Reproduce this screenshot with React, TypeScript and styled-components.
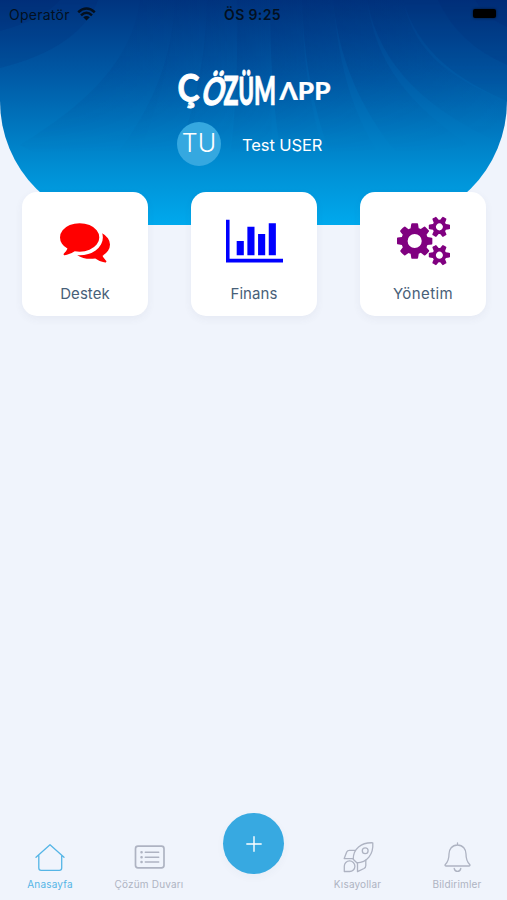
import React from "react";
import styled, { createGlobalStyle } from "styled-components";

const GlobalStyle = createGlobalStyle`
  * { box-sizing: border-box; }
  body { margin: 0; background: #f0f4fc; font-family: Inter, "Open Sans", sans-serif; }
`;

const Screen = styled.div`
  width: 507px;
  height: 900px;
  display: flex;
  flex-direction: column;
  background: #f0f4fc;
  overflow: hidden;
`;

const Header = styled.header`
  position: relative;
  height: 225px;
  flex: none;
  border-radius: 0 0 124px 124px;
  overflow: hidden;
  background: linear-gradient(180deg, #00347f 0%, #004591 15%, #0059a5 33%, #0071ba 52%, #0090d5 76%, #00a9ed 100%);
`;

const Rays = styled.svg`
  position: absolute;
  inset: 0;
`;

const HeaderContent = styled.div`
  position: relative;
  display: flex;
  flex-direction: column;
`;

const StatusBar = styled.div`
  height: 28px;
  padding: 0 11px 0 9px;
  display: grid;
  grid-template-columns: 1fr auto 1fr;
  align-items: center;
  color: #03101f;
  font-size: 14px;
`;

const Carrier = styled.div`
  display: flex;
  align-items: center;
  gap: 7px;
  letter-spacing: 0.25px;
`;

const Clock = styled.div`
  font-weight: 600;
  letter-spacing: 0.35px;
`;

const Battery = styled.div`
  justify-self: end;
  width: 23px;
  height: 9px;
  margin-top: -1px;
  border-radius: 2px;
  background: #000;
  box-shadow: 0 0 3px rgba(0, 0, 0, 0.6);
`;

const Logo = styled.svg`
  margin: 37px 0 0 172px;
  display: block;
`;

const UserRow = styled.div`
  display: flex;
  align-items: center;
  gap: 21px;
  margin: 10px 0 0 177px;
`;

const Avatar = styled.div`
  width: 44px;
  height: 44px;
  border-radius: 50%;
  display: flex;
  justify-content: center;
  padding-top: 5px;
  background: #35a8e0;
  color: #fff;
  font-size: 25px;
  line-height: 32px;
  font-weight: 300;
`;

const UserName = styled.div`
  color: #fff;
  font-size: 16.5px;
  letter-spacing: -0.1px;
  padding-top: 2px;
`;

const Cards = styled.main`
  position: relative;
  flex: 1;
  margin-top: -33px;
  padding: 0 21px 0 22px;
  display: grid;
  grid-template-columns: repeat(3, 126px);
  justify-content: space-between;
  align-content: start;
`;

const Card = styled.section`
  height: 124px;
  padding-top: 24px;
  display: flex;
  flex-direction: column;
  align-items: center;
  gap: 18px;
  border-radius: 15px;
  background: #fff;
  box-shadow: 0 3px 8px rgba(60, 70, 100, 0.06);
`;

const CardLabel = styled.div<{ $spacing: number }>`
  color: #486078;
  font-size: 15px;
  line-height: 20px;
  letter-spacing: ${(p) => p.$spacing}px;
`;

const Nav = styled.nav`
  height: 90px;
  flex: none;
  display: grid;
  grid-template-columns: 100px 98px 112px 95px 104px;
`;

const NavItem = styled.div<{ $active?: boolean }>`
  display: flex;
  flex-direction: column;
  align-items: center;
  padding-top: 30px;
  gap: 3px;
  color: ${(p) => (p.$active ? "#55b5e6" : "#aeb3c2")};
  font-size: 10px;
  line-height: 12px;
  letter-spacing: 0.17px;
  white-space: nowrap;
`;

const AddButton = styled.button`
  width: 61px;
  height: 61px;
  margin: 3px 0 0 25px;
  padding: 0;
  display: grid;
  place-items: center;
  border: 0;
  border-radius: 50%;
  background: #37a9e1;
  box-shadow: 0 3px 8px rgba(60, 70, 90, 0.04);
`;

const LineIcon = styled.svg`
  fill: none;
  stroke: currentColor;
  stroke-width: 1.3;
  stroke-linecap: round;
  stroke-linejoin: round;
`;

const leftRays = ["M60 0Q42 20 0 31V0Z", "M98 0Q80 48 0 68V0Z"];
const centreRays = [
  "M140 0C132 62 85 105 20 145L120 200C155 120 174 60 175 0Z",
  "M175 0C171 70 148 115 105 170L170 200C196 130 207 70 207 0Z",
  "M207 0C205 75 191 120 165 190L218 210C235 140 237 75 237 0Z",
  "M237 0C238 80 235 130 224 205H278C270 140 270 70 270 0Z",
  "M270 0C270 75 276 140 290 205H342C315 140 303 75 302 0Z",
  "M302 0C304 75 319 130 345 195L398 180C352 125 339 65 333 0Z",
  "M333 0C340 70 368 125 420 180L470 146C410 105 376 65 367 0Z",
  "M367 0C380 68 429 112 507 146V101C440 75 413 45 403 0Z",
];
const rightRays = ["M403 0C418 52 458 80 507 101V0Z", "M438 0Q457 43 507 65V0Z", "M475 0Q486 18 507 27V0Z"];

function HeaderRays() {
  return (
    <Rays width="507" height="225" viewBox="0 0 507 225">
      <defs>
        <linearGradient id="ray" x1="0" x2="1" y1="0" y2="0">
          <stop offset="0" stopColor="#00246d" stopOpacity="0.2" />
          <stop offset="1" stopColor="#00246d" stopOpacity="0.02" />
        </linearGradient>
        <linearGradient id="fade" x1="0" x2="0" y1="0" y2="1">
          <stop offset="0" stopColor="#fff" />
          <stop offset="0.3" stopColor="#fff" stopOpacity="0.8" />
          <stop offset="0.68" stopColor="#fff" stopOpacity="0" />
        </linearGradient>
        <mask id="rayMask"><rect width="507" height="225" fill="url(#fade)" /></mask>
      </defs>
      <g mask="url(#rayMask)">
        {leftRays.map((d) => <path key={d} d={d} fill="#00246d" opacity="0.15" />)}
        {centreRays.map((d) => <path key={d} d={d} fill="url(#ray)" />)}
        {rightRays.map((d) => <path key={d} d={d} fill="#00246d" opacity="0.15" />)}
      </g>
    </Rays>
  );
}

function Brand() {
  return (
    <Logo width="164" height="47" viewBox="172 65 164 47" fill="#fff" stroke="#fff">
      <g fontFamily="Lato, sans-serif" fontWeight="700" strokeWidth="0.9">
        <text transform="translate(177.5 102)" fontSize="38" textLength="22" lengthAdjust="spacingAndGlyphs">Ç</text>
        <text transform="translate(200 104.5) skewX(-13)" fontSize="38" textLength="22.5" lengthAdjust="spacingAndGlyphs">Ö</text>
        <text transform="translate(223.5 104.5)" fontSize="40" fontWeight="900" textLength="15" lengthAdjust="spacingAndGlyphs">Z</text>
        <text transform="translate(238.5 104.5)" fontSize="38" fontWeight="900" textLength="15.5" lengthAdjust="spacingAndGlyphs">Ü</text>
      </g>
      <text transform="translate(254 104.5)" fontFamily="Lato, sans-serif" fontSize="39" fontWeight="900" strokeWidth="0.7" textLength="22" lengthAdjust="spacingAndGlyphs">M</text>
      <text x="279.5" y="100" fontFamily="Lato, sans-serif" fontWeight="900" fontSize="24.5" strokeWidth="0.2" textLength="51" lengthAdjust="spacingAndGlyphs">ΛPP</text>
    </Logo>
  );
}

function CommentsIcon() {
  return (
    <svg width="50" height="50" viewBox="0 0 1792 1792" fill="#ff0000">
      <path d="M1408 768q0 139-94 257t-256.5 186.5-353.5 68.5q-86 0-176-16-124 88-278 128-36 9-86 16h-3q-11 0-20.5-8t-11.5-21q-1-3-1-6.5t.5-6.5 2-6l2.5-5 3.5-5.5 4-5 4.5-5 4-4.5q5-6 23-25t26-29.5 22.5-29 25-38.5 20.5-44q-124-72-195-177t-71-224q0-139 94-257t256.5-186.5 353.5-68.5 353.5 68.5 256.5 186.5 94 257zm384 256q0 120-71 224.5t-195 176.5q10 24 20.5 44t25 38.5 22.5 29 26 29.5 23 25q1 1 4 4.5t4.5 5 4 5 3.5 5.5l2.5 5 2 6 .5 6.5-1 6.5q-3 14-13 22t-22 7q-50-7-86-16-154-40-278-128-90 16-176 16-271 0-472-132 58 4 88 4 161 0 309-45t264-129q125-92 192-212t67-254q0-77-23-152 129 71 204 178t75 230z" />
    </svg>
  );
}

function ChartIcon() {
  return (
    <svg width="57" height="50" viewBox="0 0 2048 1792" fill="#0000ff">
      <path d="M640 896v512H384V896h256zm384-512v1024H768V384h256zm1024 1152v128H0V128h128v1408h1920zm-640-896v768h-256V640h256zm384-384v1152h-256V256h256z" />
    </svg>
  );
}

function GearsIcon() {
  return (
    <svg width="53" height="50" viewBox="0 0 1920 1792" fill="#800080">
      <path d="M896 896q0-106-75-181t-181-75-181 75-75 181 75 181 181 75 181-75 75-181zm768 512q0-52-38-90t-90-38-90 38-38 90q0 53 37.5 90.5t90.5 37.5 90.5-37.5 37.5-90.5zm0-1024q0-52-38-90t-90-38-90 38-38 90q0 53 37.5 90.5t90.5 37.5 90.5-37.5 37.5-90.5zm-384 421v185q0 10-7 19.5t-16 10.5l-155 24q-11 35-32 76 34 48 90 115 7 11 7 20 0 12-7 19-23 30-82.5 89.5t-78.5 59.5q-11 0-21-7l-115-90q-37 19-77 31-11 108-23 155-7 24-30 24h-186q-11 0-20-7.5t-10-17.5l-23-153q-34-10-75-31l-118 89q-7 7-20 7-11 0-21-8-144-133-144-160 0-9 7-19 10-14 41-53t47-61q-23-44-35-82l-152-24q-10-1-17-9.5t-7-19.5v-185q0-10 7-19.5t16-10.5l155-24q11-35 32-76-34-48-90-115-7-11-7-20 0-12 7-20 22-30 82-89t79-59q11 0 21 7l115 90q34-18 77-32 11-108 23-154 7-24 30-24h186q11 0 20 7.5t10 17.5l23 153q34 10 75 31l118-89q8-7 20-7 11 0 21 8 144 133 144 160 0 8-7 19-12 16-42 54t-45 60q23 48 34 82l152 23q10 2 17 10.5t7 19.5zm640 533v140q0 16-149 31-12 27-30 52 51 113 51 138 0 4-4 7-122 71-124 71-8 0-46-47t-52-68q-20 2-30 2t-30-2q-14 21-52 68t-46 47q-2 0-124-71-4-3-4-7 0-25 51-138-18-25-30-52-149-15-149-31v-140q0-16 149-31 13-29 30-52-51-113-51-138 0-4 4-7 4-2 35-20t59-34 30-16q8 0 46 46.5t52 67.5q20-2 30-2t30 2q51-71 92-112l6-2q4 0 124 70 4 3 4 7 0 25-51 138 17 23 30 52 149 15 149 31zm0-1024v140q0 16-149 31-12 27-30 52 51 113 51 138 0 4-4 7-122 71-124 71-8 0-46-47t-52-68q-20 2-30 2t-30-2q-14 21-52 68t-46 47q-2 0-124-71-4-3-4-7 0-25 51-138-18-25-30-52-149-15-149-31v-140q0-16 149-31 13-29 30-52-51-113-51-138 0-4 4-7 4-2 35-20t59-34 30-16q8 0 46 46.5t52 67.5q20-2 30-2t30 2q51-71 92-112l6-2q4 0 124 70 4 3 4 7 0 25-51 138 17 23 30 52 149 15 149 31z" />
    </svg>
  );
}

export default function App() {
  return (
    <>
      <GlobalStyle />
      <Screen>
        <Header>
          <HeaderRays />
          <HeaderContent>
            <StatusBar>
              <Carrier>
                Operatör
                <svg width="19" height="14" viewBox="0 0 19 14" fill="none" stroke="#03101f" strokeWidth="2.5">
                  <path d="M1.2 5.2Q9.5-2.2 17.8 5.2M4 8.3Q9.5 3.2 15 8.3" />
                  <path d="M9.5 13.6L6.2 10.2Q9.5 7.6 12.8 10.2Z" fill="#03101f" stroke="none" />
                </svg>
              </Carrier>
              <Clock>ÖS 9:25</Clock>
              <Battery />
            </StatusBar>
            <Brand />
            <UserRow>
              <Avatar>TU</Avatar>
              <UserName>Test USER</UserName>
            </UserRow>
          </HeaderContent>
        </Header>
        <Cards>
          <Card><CommentsIcon /><CardLabel $spacing={0.05}>Destek</CardLabel></Card>
          <Card><ChartIcon /><CardLabel $spacing={0.1}>Finans</CardLabel></Card>
          <Card><GearsIcon /><CardLabel $spacing={0.4}>Yönetim</CardLabel></Card>
        </Cards>
        <Nav>
          <NavItem $active>
            <LineIcon width="34" height="35" viewBox="33.5 840 34 35">
              <path d="M36.5 857.2L50.5 844.8L64.5 857.2M39.3 855.5V868Q39.3 870.3 41.6 870.3H59.9Q62.2 870.3 62.2 868V855.5" />
            </LineIcon>
            Anasayfa
          </NavItem>
          <NavItem>
            <LineIcon width="34" height="35" viewBox="132 840 34 35">
              <rect x="135.5" y="846.2" width="28.5" height="21.6" rx="2.5" strokeWidth="1.7" />
              <path d="M145.3 852.3H158.7M145.3 857.2H158.7M145.3 862.1H158.7" strokeWidth="1.5" />
              <path d="M141.5 852.3h.1M141.5 857.2h.1M141.5 862.1h.1" strokeWidth="2.5" />
            </LineIcon>
            Çözüm Duvarı
          </NavItem>
          <AddButton aria-label="+">
            <svg width="16" height="16" viewBox="0 0 16 16" stroke="#fff" strokeWidth="1.4" strokeLinecap="round">
              <path d="M8 .8V15.2M.8 8H15.2" />
            </svg>
          </AddButton>
          <NavItem>
            <LineIcon width="34" height="35" viewBox="341 840 34 35">
              <path d="M353.2 859.2C353.2 849 361 842.3 372.8 842.8C373.6 854.5 367 862.8 356.8 862.8Z" />
              <circle cx="365.2" cy="850.8" r="2.9" />
              <path d="M355.5 850.3H349.5Q347.5 850.3 346.7 852L344.2 858.6H353.2M365.8 860.2V865.5Q365.8 867.4 364 868.5L357.5 871.6V862.8" />
              <path d="M344.3 871.5V866.3A5.3 5.3 0 1 1 349.6 871.5Z" />
            </LineIcon>
            Kısayollar
          </NavItem>
          <NavItem>
            <LineIcon width="34" height="35" viewBox="440.5 840 34 35">
              <path d="M458 843V845M458 845C452.5 845 449.5 849.3 449.5 854C449.5 860 448.2 862 446 864.2C445 865.3 445.5 866 446.8 866H469.2C470.5 866 471 865.3 470 864.2C467.8 862 466.5 860 466.5 854C466.5 849.3 463.5 845 458 845ZM454.7 868.5Q455.3 871.4 458 871.4T461.3 868.5" />
            </LineIcon>
            Bildirimler
          </NavItem>
        </Nav>
      </Screen>
    </>
  );
}
